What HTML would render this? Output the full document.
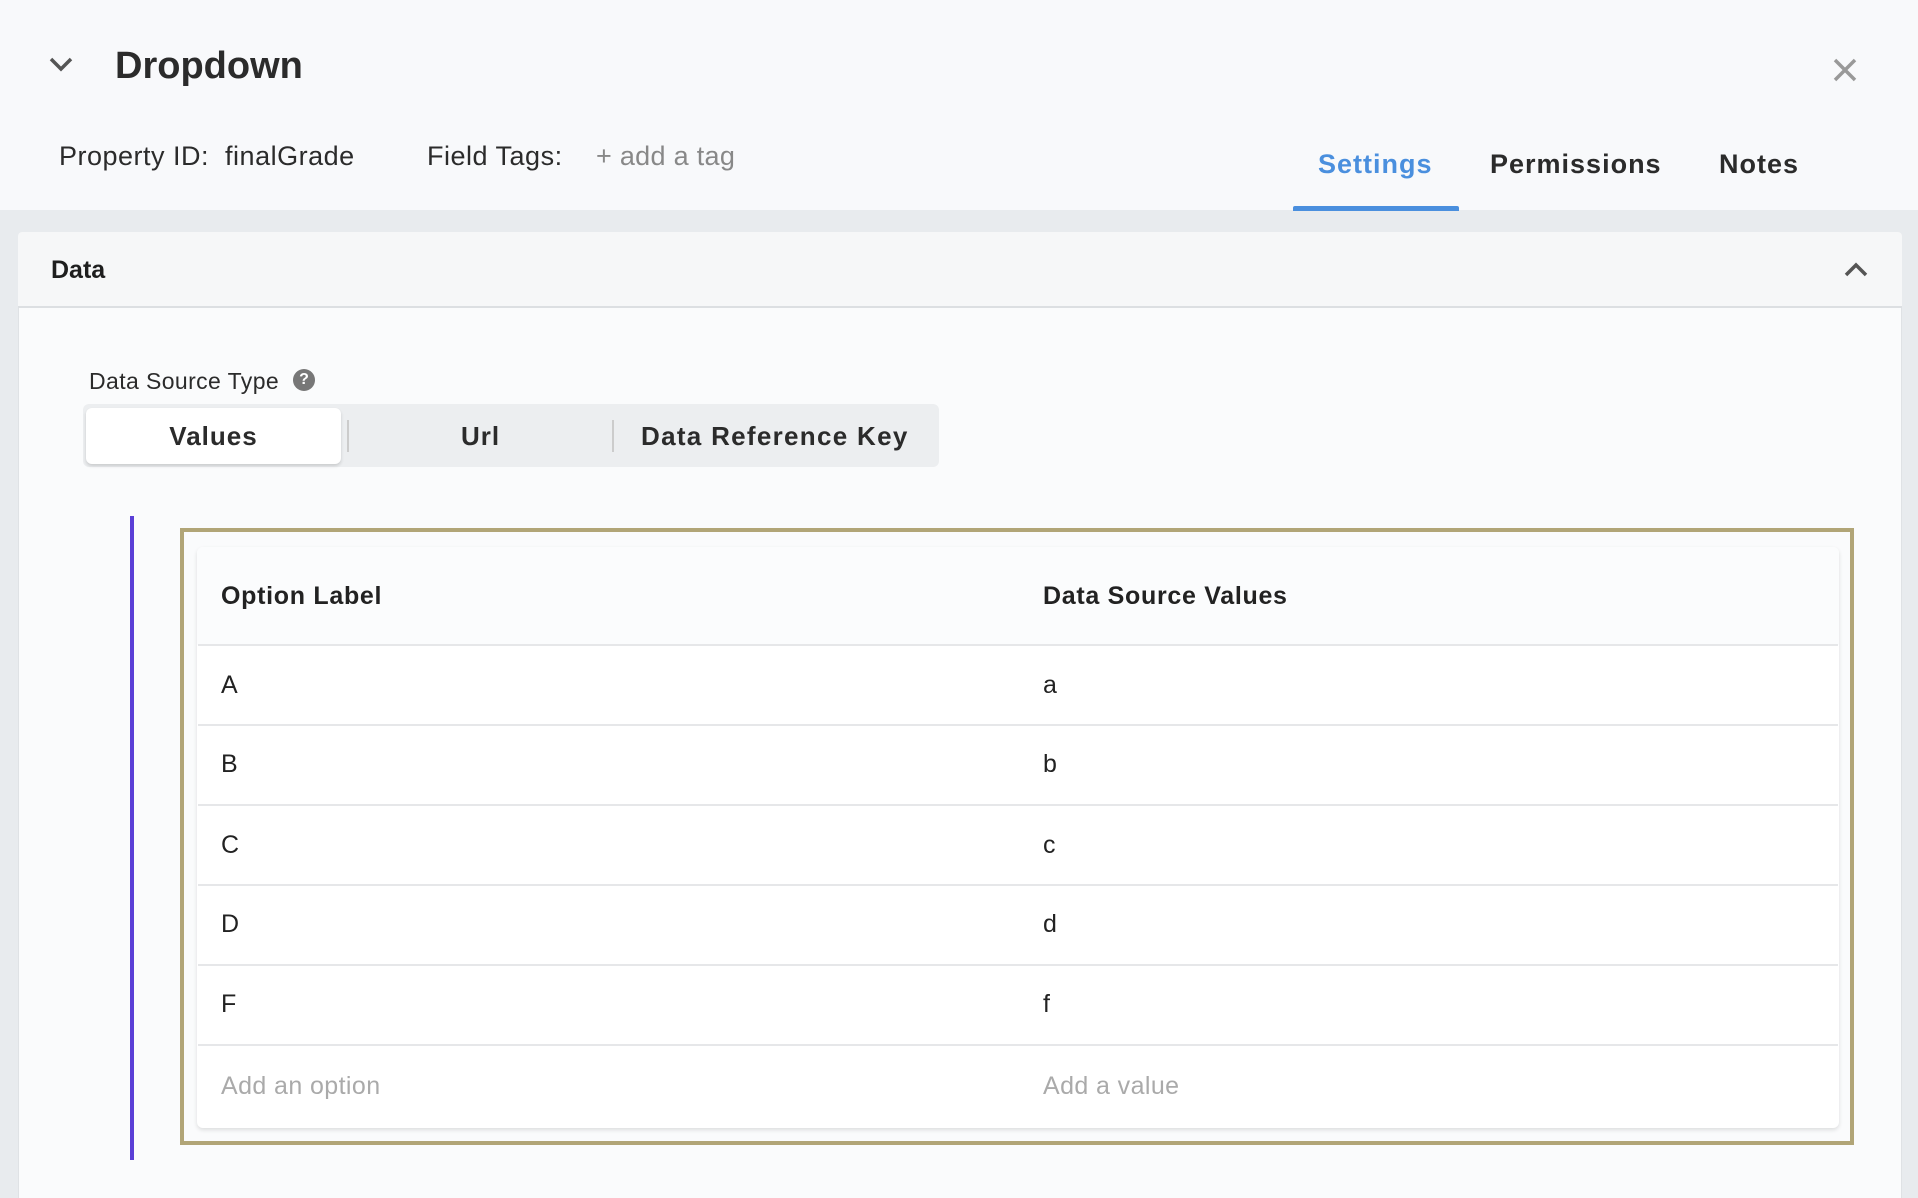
<!DOCTYPE html>
<html><head><meta charset="utf-8"><style>
*{box-sizing:border-box;margin:0;padding:0}
html,body{width:1918px;height:1198px;overflow:hidden}
body{background:#e8ebee;font-family:"Liberation Sans",Arial,sans-serif;color:#222;position:relative}
.abs{position:absolute}
#hdr{left:0;top:0;width:1918px;height:210px;background:#f8f9fb}
.t{position:absolute;white-space:nowrap;line-height:1}
#card{left:18px;top:232px;width:1884px;height:966px;background:#fafbfc;border:1px solid #dfe2e5;border-bottom:none;border-radius:4px 4px 0 0}
#ch{left:18px;top:232px;width:1884px;height:76px;background:#f6f7f8;border-bottom:2px solid #dcdfe2;border-radius:4px 4px 0 0}
.row{position:absolute;left:198px;width:1640px;height:2px;background:#e6e7e9}
.cell{position:absolute;font-size:25px;color:#222;line-height:1;letter-spacing:0.4px}
</style></head><body>
<div id="hdr" class="abs"></div>
<svg class="abs" style="left:48px;top:56px" width="26" height="18" viewBox="0 0 26 18"><path d="M3 3 L13 13 L23 3" fill="none" stroke="#555" stroke-width="3.5"/></svg>
<div class="t" style="left:115px;top:47px;font-size:38px;font-weight:bold;color:#2b2b2b">Dropdown</div>
<svg class="abs" style="left:1832px;top:57px" width="26" height="26" viewBox="0 0 26 26"><path d="M3 3 L23 23 M23 3 L3 23" stroke="#999" stroke-width="3.5"/></svg>
<div class="t" style="left:59px;top:143px;font-size:27px;color:#2b2b2b;letter-spacing:0.5px">Property ID:&nbsp; finalGrade</div>
<div class="t" style="left:427px;top:143px;font-size:27px;color:#2b2b2b;letter-spacing:0.5px">Field Tags:</div>
<div class="t" style="left:596px;top:143px;font-size:27px;color:#888;letter-spacing:0.3px">+ add a tag</div>
<div class="t" style="left:1318px;top:151px;font-size:27px;font-weight:bold;color:#4a8fde;letter-spacing:1px">Settings</div>
<div class="t" style="left:1490px;top:151px;font-size:27px;font-weight:bold;color:#2b2b2b;letter-spacing:1px">Permissions</div>
<div class="t" style="left:1719px;top:151px;font-size:27px;font-weight:bold;color:#2b2b2b;letter-spacing:1px">Notes</div>
<div class="abs" style="left:1293px;top:206px;width:166px;height:5px;background:#4a8fde;border-radius:2px 2px 0 0"></div>

<div id="card" class="abs"></div>
<div id="ch" class="abs"></div>
<div class="t" style="left:51px;top:258px;font-size:25px;font-weight:bold;color:#1e1e1e">Data</div>
<svg class="abs" style="left:1843px;top:260px" width="26" height="18" viewBox="0 0 26 18"><path d="M3 15 L13 5 L23 15" fill="none" stroke="#555" stroke-width="3.5"/></svg>

<div class="t" style="left:89px;top:370px;font-size:23px;color:#2b2b2b;letter-spacing:0.4px">Data Source Type</div>
<div class="abs" style="left:293px;top:369px;width:22px;height:22px;border-radius:50%;background:#777;color:#fff;font-size:16px;font-weight:bold;text-align:center;line-height:22px">?</div>
<div class="abs" style="left:83px;top:404px;width:856px;height:63px;background:#eceef0;border-radius:6px"></div>
<div class="abs" style="left:86px;top:408px;width:255px;height:56px;background:#fff;border-radius:6px;box-shadow:0 2px 3px rgba(0,0,0,.15)"></div>
<div class="abs" style="left:347px;top:420px;width:2px;height:32px;background:#ccc"></div>
<div class="abs" style="left:612px;top:420px;width:2px;height:32px;background:#ccc"></div>
<div class="t" style="left:86px;width:255px;text-align:center;top:423px;font-size:26px;font-weight:bold;color:#2b2b2b;letter-spacing:1px">Values</div>
<div class="t" style="left:349px;width:263px;text-align:center;top:423px;font-size:26px;font-weight:bold;color:#2b2b2b;letter-spacing:1px">Url</div>
<div class="t" style="left:641px;top:423px;font-size:26px;font-weight:bold;color:#2b2b2b;letter-spacing:1.3px">Data Reference Key</div>

<div class="abs" style="left:130px;top:516px;width:4px;height:644px;background:#5a3fd6"></div>
<div class="abs" style="left:180px;top:528px;width:1674px;height:617px;border:4px solid #b1a577"></div>
<div class="abs" style="left:197px;top:547px;width:1642px;height:581px;background:#fff;border-radius:6px;box-shadow:0 2px 4px rgba(0,0,0,.12)"></div>
<div class="abs" style="left:197px;top:547px;width:1642px;height:98px;background:#fbfcfd;border-radius:6px 6px 0 0"></div>
<div class="cell" style="left:221px;top:584px;font-weight:bold;letter-spacing:0.7px">Option Label</div>
<div class="cell" style="left:1043px;top:584px;font-weight:bold;letter-spacing:0.7px">Data Source Values</div>
<div class="row" style="top:644px"></div>
<div class="row" style="top:724px"></div>
<div class="row" style="top:804px"></div>
<div class="row" style="top:884px"></div>
<div class="row" style="top:964px"></div>
<div class="row" style="top:1044px"></div>
<div class="cell" style="left:221px;top:673px">A</div><div class="cell" style="left:1043px;top:673px">a</div>
<div class="cell" style="left:221px;top:752px">B</div><div class="cell" style="left:1043px;top:752px">b</div>
<div class="cell" style="left:221px;top:833px">C</div><div class="cell" style="left:1043px;top:833px">c</div>
<div class="cell" style="left:221px;top:912px">D</div><div class="cell" style="left:1043px;top:912px">d</div>
<div class="cell" style="left:221px;top:992px">F</div><div class="cell" style="left:1043px;top:992px">f</div>
<div class="cell" style="left:221px;top:1074px;color:#aaa">Add an option</div>
<div class="cell" style="left:1043px;top:1074px;color:#aaa">Add a value</div>
</body></html>
